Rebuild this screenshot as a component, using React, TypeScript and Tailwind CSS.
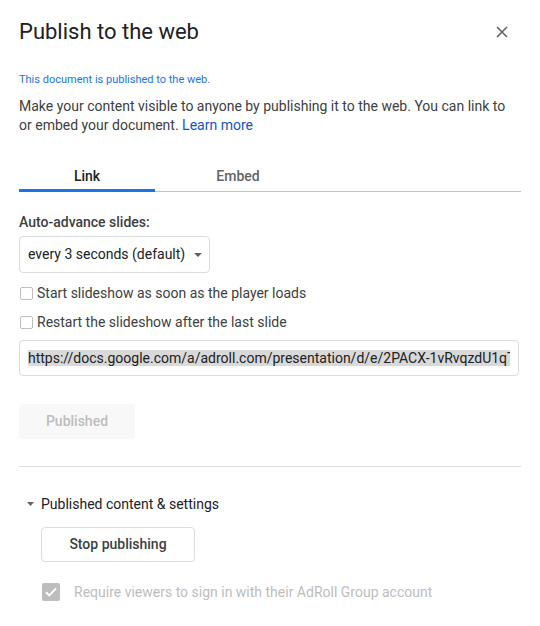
export default function App() {
  return (
    <div className="w-[540px] h-[626px] bg-white px-[19px] pt-[18px] font-[Roboto,'Liberation_Sans',sans-serif] text-[#3c4043]">
      {/* Header */}
      <div className="flex items-center justify-between">
        <h1 className="text-[22px] leading-[28px] text-[#202124]">Publish to the web</h1>
        <button className="mr-[7px] flex h-[24px] w-[24px] items-center justify-center">
          <svg width="12" height="12" viewBox="0 0 12 12">
            <path d="M1 1L11 11M11 1L1 11" stroke="#5f6368" strokeWidth="1.6" />
          </svg>
        </button>
      </div>

      <p className="mt-[27px] text-[11px] leading-[14px] text-[#1a73e8]">
        This document is published to the web.
      </p>
      <p className="mt-[10px] text-[14px] leading-[19px] text-[#3c4043]">
        Make your content visible to anyone by publishing it to the web. You can link to or embed
        your document. <a className="text-[#1155cc]">Learn more</a>
      </p>

      {/* Tabs */}
      <div className="mt-[31px] flex border-b border-[#c4c4c4]">
        <div className="-mb-px w-[136px] border-b-[3px] border-[#1a73e8] pb-[3px] text-center text-[14px] font-medium leading-[20px] text-[#202124]">
          Link
        </div>
        <div className="w-[166px] pb-[3px] text-center text-[14px] font-medium leading-[20px] text-[#5f6368]">
          Embed
        </div>
      </div>

      <p className="mt-[20px] text-[14px] font-medium leading-[20px] text-[#3c4043]">
        Auto-advance slides:
      </p>
      <div className="mt-[4px] flex h-[37px] w-[191px] items-center rounded-[4px] border border-[#dadce0] pl-[8px] text-[14px] text-[#202124]">
        <span>every 3 seconds (default)</span>
        <svg className="ml-[9px]" width="8" height="4" viewBox="0 0 8 4">
          <path d="M0 0H8L4 4Z" fill="#5f6368" />
        </svg>
      </div>

      <div className="mt-[10px] space-y-[9px]">
        {['Start slideshow as soon as the player loads', 'Restart the slideshow after the last slide'].map(
          (label) => (
            <label key={label} className="flex items-center text-[14px] leading-[20px] text-[#3c4043]">
              <span className="ml-px h-[13px] w-[13px] rounded-[2px] border border-[#bdbdbd] bg-white" />
              <span className="ml-[4px]">{label}</span>
            </label>
          )
        )}
      </div>

      <div className="mt-[8px] flex h-[36px] w-[500px] items-center rounded-[4px] border border-[#dadce0] px-[8px]">
        <div className="w-full overflow-hidden whitespace-nowrap text-[14px] leading-[16px] text-[#202124]">
          <span className="bg-[#d9d9d9] py-[1px]">
            https://docs.google.com/a/adroll.com/presentation/d/e/2PACX-1vRvqzdU1qTx8kPz/pub?start=false&amp;loop=false
          </span>
        </div>
      </div>

      <button className="mt-[28px] h-[35px] w-[116px] rounded-[4px] bg-[#f8f8f8] text-[14px] font-medium text-[#bdbdbd]">
        Published
      </button>

      <div className="mt-[27px] h-px bg-[#dadce0]" />

      {/* Published content & settings */}
      <div className="mt-[27px] flex items-center text-[14px] leading-[20px] text-[#202124]">
        <svg className="ml-[8px]" width="7" height="4" viewBox="0 0 7 4">
          <path d="M0 0H7L3.5 4Z" fill="#5f6368" />
        </svg>
        <span className="ml-[7px]">Published content &amp; settings</span>
      </div>

      <div className="pl-[22px]">
        <button className="mt-[13px] h-[35px] w-[154px] rounded-[4px] border border-[#dadce0] bg-white text-[14px] font-medium text-[#3c4043]">
          Stop publishing
        </button>

        <div className="mt-[21px] flex items-center">
          <span className="ml-px flex h-[18px] w-[18px] items-center justify-center rounded-[2px] bg-[#bdbdbd]">
            <svg width="12" height="10" viewBox="0 0 12 10">
              <path d="M1 5.2L4.3 8.4L11 1.4" stroke="white" strokeWidth="2" fill="none" />
            </svg>
          </span>
          <span className="ml-[14px] text-[14px] leading-[18px] text-[#bdbdbd]">
            Require viewers to sign in with their AdRoll Group account
          </span>
        </div>
      </div>
    </div>
  );
}
